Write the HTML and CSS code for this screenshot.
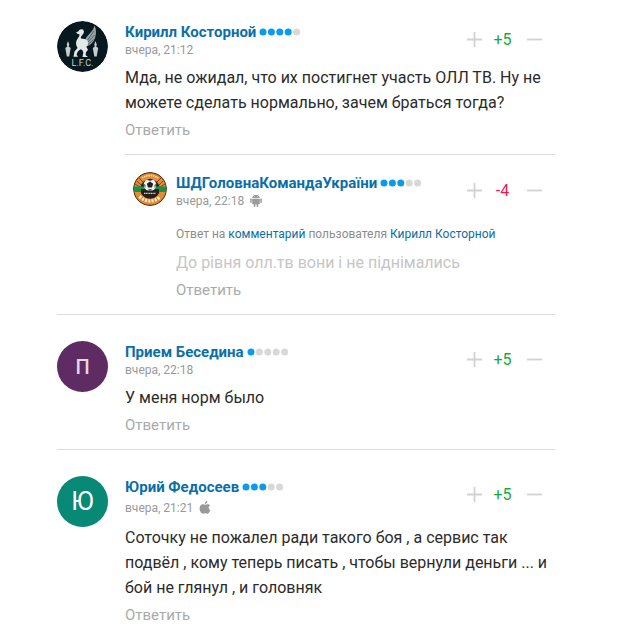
FILE: index.html
```html
<!DOCTYPE html>
<html lang="ru">
<head>
  <meta charset="UTF-8" />
  <meta name="viewport" content="width=device-width, initial-scale=1.0"/>
  <title>Комментарии</title>
  <link rel="stylesheet" href="styles.css">
</head>
<body>

  <svg class="sprite" aria-hidden="true">
    <symbol id="plus" viewBox="0 0 15 15"><path d="M7.5 0v15M0 7.5h15" stroke="currentColor" stroke-width="1.8"/></symbol>
    <symbol id="minus" viewBox="0 0 15 15"><path d="M0 7.5h15" stroke="currentColor" stroke-width="1.8"/></symbol>
  </svg>

  <main class="comments">

    <article class="comment">
      <svg class="avatar" viewBox="0 0 51 51" role="img" aria-label="Кирилл Косторной">
        <circle cx="25.5" cy="25.5" r="25.5" fill="#07191f"/>
        <path d="M28 20C29 14 36 12 37.500 4.500c2 4 1.800 8.500.5 12.500-1.200 4-4 6.500-8.500 8.500z" fill="#9aa5a8"/>
        <path d="M30.500 19l6.500-9M31 21l6.500-7M31 23.500l5.500-5" stroke="#3d4d53" stroke-width=".8"/>
        <path d="M19 11.500l2.500-1.300c.8-2.400 4.300-2.700 5.200-.5.900 2.400-1.300 4-2.600 5.800-.9 1.500.2 2.300 1.800 2.300 2.500 0 4.600 1 5 3.500.3 2-.4 3.500-1.600 4.500l1.700 3-2 2.500-.3 3 2.300 1.700h-5.500l.8-4.500-1-2.500-1.800-.8-2.500 2-1.500 3.300 1.500 2.200h-4.500l1-5.200 3-3.600c-2-2.900-2-6.300 0-9.100 1.400-1.900 2.300-3.100 1.900-4.500l-1.600-.4z" fill="#e4e8e8"/>
        <path d="M11 20l1.300 3.500-.6 2 2 1.500-1.500 8.500h-2.400L8.300 27l2-1.500-.6-2zM38.500 20l1.300 3.500-.6 2 2 1.500-1.500 8.500h-2.400L35.800 27l2-1.500-.6-2z" fill="#c6cdce"/>
        <text class="crest" x="25.500" y="44.500" text-anchor="middle" fill="#c9d0d2">L.F.C.</text>
      </svg>
      <div class="body">
        <header class="head">
          <div class="who">
            <div class="title">
              <a href="#" class="name">Кирилл Косторной</a>
              <svg class="rating" viewBox="0 0 42 8"><g fill="#0b9bee"><circle cx="4" cy="4" r="3.500"/><circle cx="12.400" cy="4" r="3.500"/><circle cx="20.800" cy="4" r="3.500"/><circle cx="29.200" cy="4" r="3.500"/></g><circle cx="37.600" cy="4" r="3.500" fill="#d8d8d8"/></svg>
            </div>
            <div class="date">вчера, 21:12</div>
          </div>
          <div class="votes">
            <button class="vote" aria-label="Плюс"><svg><use href="#plus"/></svg></button>
            <span class="score up">+5</span>
            <button class="vote" aria-label="Минус"><svg><use href="#minus"/></svg></button>
          </div>
        </header>
        <p class="text">Мда, не ожидал, что их постигнет участь ОЛЛ ТВ. Ну не можете сделать нормально, зачем браться тогда?</p>
        <button class="reply">Ответить</button>

        <article class="comment nested">
          <svg class="avatar" viewBox="0 0 34 34" role="img" aria-label="ШДГоловнаКомандаУкраїни">
            <circle cx="17" cy="17" r="17" fill="#4f3a22"/>
            <circle cx="17" cy="17" r="15.800" fill="#e58a35"/>
            <path d="M4 9l7 7M6 6l7 7M30 9l-7 7M28 6l-7 7M2 12l8 5M32 12l-8 5" stroke="#7c4a22" stroke-width="1"/>
            <path d="M9 6q8-5 16 0" fill="none" stroke="#f9d9a5" stroke-width="1.800" stroke-dasharray="1.500 .8"/>
            <circle cx="17" cy="17" r="9.800" fill="#24201b"/>
            <path d="M.8 14.500h32.400v5.500H.8z" fill="#159447"/>
            <path d="M8 17h18v3.500l-2 3-7 2.500-7-2.500-2-3z" fill="#24201b"/>
            <circle cx="17" cy="12.800" r="6.200" fill="#f3f3f1"/>
            <path d="M17 9.500l3.200 2.300-1.200 3.700h-4l-1.200-3.700zM13.500 7.800l3.500-1.200 3.500 1.200-3.500 1zM10.900 12l1.600 1-.3 3zM23.100 12l-1.600 1 .3 3zM14.500 18l2.500-1 2.500 1-2.500.8z" fill="#222"/>
            <path d="M11 21.300h12" stroke="#d8d3cb" stroke-width="1.300" stroke-dasharray="1.200 .5"/>
            <path d="M6.500 24.500q10.500 9 21 0" fill="none" stroke="#fff0d2" stroke-width="3.200" stroke-dasharray="2 1.300"/>
          </svg>
          <div class="body">
            <header class="head">
              <div class="who">
                <div class="title">
                  <a href="#" class="name">ШДГоловнаКомандаУкраїни</a>
                  <svg class="rating" viewBox="0 0 42 8"><g fill="#0b9bee"><circle cx="4" cy="4" r="3.500"/><circle cx="12.400" cy="4" r="3.500"/><circle cx="20.800" cy="4" r="3.500"/></g><g fill="#d8d8d8"><circle cx="29.200" cy="4" r="3.500"/><circle cx="37.600" cy="4" r="3.500"/></g></svg>
                </div>
                <div class="date">вчера, 22:18
                  <svg class="device" viewBox="0 0 12 13" role="img" aria-label="Android"><g fill="#9a9a9a"><path d="M2.200 4.100C2.300 2.700 3 1.900 3.900 1.400L3.200.3l.3-.2.8 1.100a4.700 4.700 0 0 1 3.400 0L8.500.1l.3.2-.7 1.100c.9.5 1.600 1.300 1.700 2.700z"/><path d="M2.200 4.700h7.600v4.900q0 .7-.7.700H8.200v1.900a.8.800 0 0 1-1.600 0v-1.900H5.400v1.900a.8.800 0 0 1-1.600 0v-1.900h-.9q-.7 0-.7-.7z"/><rect x=".2" y="4.500" width="1.500" height="4.500" rx=".7"/><rect x="10.300" y="4.500" width="1.500" height="4.500" rx=".7"/></g><g fill="#fff"><circle cx="4.400" cy="2.700" r=".4"/><circle cx="7.600" cy="2.700" r=".4"/></g></svg>
                </div>
              </div>
              <div class="votes">
                <button class="vote" aria-label="Плюс"><svg><use href="#plus"/></svg></button>
                <span class="score down">-4</span>
                <button class="vote" aria-label="Минус"><svg><use href="#minus"/></svg></button>
              </div>
            </header>
            <p class="answer">Ответ на <a href="#">комментарий</a> пользователя <a href="#">Кирилл Косторной</a></p>
            <p class="text faded">До рівня олл.тв вони і не піднімались</p>
            <button class="reply">Ответить</button>
          </div>
        </article>
      </div>
    </article>

    <article class="comment">
      <div class="avatar letter purple">П</div>
      <div class="body">
        <header class="head">
          <div class="who">
            <div class="title">
              <a href="#" class="name">Прием Беседина</a>
              <svg class="rating" viewBox="0 0 42 8"><circle cx="4" cy="4" r="3.500" fill="#0b9bee"/><g fill="#d8d8d8"><circle cx="12.400" cy="4" r="3.500"/><circle cx="20.800" cy="4" r="3.500"/><circle cx="29.200" cy="4" r="3.500"/><circle cx="37.600" cy="4" r="3.500"/></g></svg>
            </div>
            <div class="date">вчера, 22:18</div>
          </div>
          <div class="votes">
            <button class="vote" aria-label="Плюс"><svg><use href="#plus"/></svg></button>
            <span class="score up">+5</span>
            <button class="vote" aria-label="Минус"><svg><use href="#minus"/></svg></button>
          </div>
        </header>
        <p class="text">У меня норм было</p>
        <button class="reply">Ответить</button>
      </div>
    </article>

    <article class="comment">
      <div class="avatar letter teal">Ю</div>
      <div class="body">
        <header class="head">
          <div class="who">
            <div class="title">
              <a href="#" class="name">Юрий Федосеев</a>
              <svg class="rating" viewBox="0 0 42 8"><g fill="#0b9bee"><circle cx="4" cy="4" r="3.500"/><circle cx="12.400" cy="4" r="3.500"/><circle cx="20.800" cy="4" r="3.500"/></g><g fill="#d8d8d8"><circle cx="29.200" cy="4" r="3.500"/><circle cx="37.600" cy="4" r="3.500"/></g></svg>
            </div>
            <div class="date tall">вчера, 21:21
              <svg class="device" viewBox="0 0 12 13" role="img" aria-label="Apple"><path d="M8.400.1c.1 1.600-1.100 2.900-2.500 2.900C5.700 1.500 7 .2 8.400.1zM10.900 4.400c-1.900 1.200-1.600 3.800.5 4.700-.6 1.700-1.700 3.600-2.900 3.700-.9 0-1.200-.5-2.200-.5s-1.300.5-2.200.5C2.200 12.800.6 10 .6 7.300c0-2.700 1.700-4.100 3.300-4.100 1 0 1.700.6 2.400.6s1.500-.7 2.700-.6c.8 0 1.500.5 1.900 1.200z" fill="#999"/></svg>
            </div>
          </div>
          <div class="votes">
            <button class="vote" aria-label="Плюс"><svg><use href="#plus"/></svg></button>
            <span class="score up">+5</span>
            <button class="vote" aria-label="Минус"><svg><use href="#minus"/></svg></button>
          </div>
        </header>
        <p class="text">Соточку не пожалел ради такого боя , а сервис так подвёл , кому теперь писать , чтобы вернули деньги ... и бой не глянул , и головняк</p>
        <button class="reply">Ответить</button>
      </div>
    </article>

  </main>

</body>
</html>
```
FILE: styles.css
```css
* {margin: 0; padding: 0; box-sizing: border-box;}
body {
  font-family: Roboto, sans-serif;
  background: #fff;
  color: #2b2b2b;
}
a {
  color: #0a6fa8;
  text-decoration: none;
}
button {
  border: none;
  background: none;
  font-family: inherit;
  cursor: pointer;
}

.sprite {
  display: none;
}

.comments {
  padding: 0 65px 0 57px;
}

.comment {
  display: flex;
  align-items: flex-start;
  gap: 17px;
  padding-top: 26px;
}
.comment:first-child {
  padding-top: 21px;
}
.comments > .comment + .comment {
  border-top: 1px solid #dcdcdc;
}

.avatar {
  flex: none;
  width: 51px;
  height: 51px;
  border-radius: 50%;
}
.letter {
  display: flex;
  align-items: center;
  justify-content: center;
}
.purple {
  background: #5e2c62;
  color: #e3d6e4;
  font-size: 20px;
  font-weight: 500;
}
.teal {
  background: #078975;
  color: #fff;
  font-size: 25px;
}
.crest {
  font-size: 9px;
}

.body {
  flex: 1;
  min-width: 0;
}

.head {
  display: flex;
  justify-content: space-between;
  align-items: flex-start;
}
.title {
  display: flex;
  align-items: center;
  gap: 3px;
  height: 22px;
}
.name {
  font-size: 15px;
  font-weight: bold;
}
.rating {
  width: 42px;
  height: 8px;
}

.date {
  display: flex;
  align-items: center;
  gap: 6px;
  height: 13px;
  font-size: 12px;
  color: #999;
}
.date.tall {
  height: 19px;
}
.device {
  width: 12px;
  height: 13px;
}

.votes {
  display: flex;
  align-items: center;
  height: 36px;
  padding-right: 13px;
}
.vote {
  width: 15px;
  height: 15px;
  color: #d2d2d2;
}
.vote svg {
  display: block;
  width: 15px;
  height: 15px;
}
.score {
  width: 45px;
  padding-right: 4px;
  text-align: center;
  font-size: 16px;
}
.up {
  color: #13ab3c;
}
.down {
  color: #f5174f;
}

.text {
  margin-top: 8px;
  font-size: 16px;
  line-height: 25px;
}
.faded {
  color: #c6c6c6;
}

.reply {
  display: block;
  margin: 3px 0 12px;
  font-size: 15px;
  line-height: 24px;
  color: #aaa;
}

/* reply to another comment */
.nested {
  gap: 9px;
  padding: 17px 0 0 8px;
  border-top: 1px solid #dcdcdc;
}
.nested .avatar {
  width: 34px;
  height: 34px;
}
.answer {
  margin-top: 18px;
  font-size: 12px;
  line-height: 16px;
  color: #8c8c8c;
}
```
